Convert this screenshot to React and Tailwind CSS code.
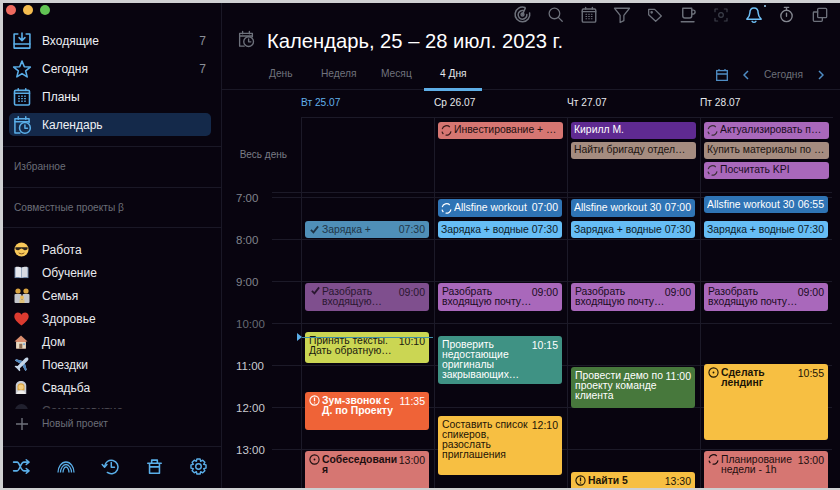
import React from "react";

const blue = "#5aaee8";

const Ic = ({ children, size = 20, color = blue, sw = 1.6, className = "" }) => (
  <svg width={size} height={size} viewBox="0 0 24 24" fill="none" stroke={color} strokeWidth={sw} strokeLinecap="round" strokeLinejoin="round" className={className}>
    {children}
  </svg>
);

const Inbox = () => (
  <Ic size={20} sw={1.9}>
    <path d="M7 3.5H2.5V20.5H21.5V3.5H17" />
    <path d="M2.5 15.5H21.5" />
    <path d="M12 2.5V11M8.5 8L12 11.5L15.5 8" />
  </Ic>
);
const Star = () => (
  <Ic size={20} sw={1.9}>
    <path d="M12 2.5L14.8 9.3L22 9.7L16.4 14.3L18.2 21.5L12 17.5L5.8 21.5L7.6 14.3L2 9.7L9.2 9.3Z" />
  </Ic>
);
const Plans = ({ color = blue, size = 20 }) => (
  <Ic size={size} color={color} sw={1.9}>
    <rect x="3" y="4" width="18" height="17.5" rx="1.5" />
    <path d="M3 7.5H21M7.5 2V4M16.5 2V4" />
    <path d="M8 11H8.8M11.6 11H12.4M15.2 11H16M8 14H8.8M11.6 14H12.4M15.2 14H16M8 17H8.8M11.6 17H12.4M15.2 17H16" strokeWidth="1.6" />
  </Ic>
);
const CalClock = ({ color = blue, size = 20 }) => (
  <Ic size={size} color={color} sw={1.8}>
    <path d="M9.5 21.5H3.5V4.5H20.5V9" />
    <path d="M3.5 8H20.5M7.5 2V5M16.5 2V5" />
    <circle cx="15.5" cy="15.5" r="6.5" />
    <path d="M15.5 12V15.8H18.5" />
  </Ic>
);

const Sunglasses = () => (
  <svg width="15" height="15" viewBox="0 0 16 16">
    <circle cx="8" cy="8" r="7.5" fill="#f8c95a" />
    <path d="M1.5 5.5H14.5V7C14.5 8.5 12 9 10.8 8.5C9.5 8 9 7 8 7C7 7 6.5 8 5.2 8.5C4 9 1.5 8.5 1.5 7Z" fill="#2a2420" />
    <path d="M5 11.5C6.5 13 9.5 13 11 11.5" stroke="#7a4a1a" strokeWidth="1" fill="none" />
  </svg>
);
const Book = () => (
  <svg width="15" height="13" viewBox="0 0 16 14">
    <rect x="0.5" y="1.5" width="15" height="11.5" fill="#6f87a8" />
    <path d="M1.5 1C4 0.6 6.5 1 7.7 1.8V12.6C6.5 12 4 11.6 1.5 12Z" fill="#e6e8ee" />
    <path d="M14.5 1C12 0.6 9.5 1 8.3 1.8V12.6C9.5 12 12 11.6 14.5 12Z" fill="#d8dbe3" />
  </svg>
);
const Family = () => (
  <svg width="16" height="15" viewBox="0 0 16 15">
    <circle cx="4" cy="3" r="2.6" fill="#d9a441" />
    <circle cx="12" cy="3" r="2.6" fill="#d9a441" />
    <rect x="0.5" y="6" width="7" height="9" rx="1" fill="#c3c6cc" />
    <rect x="8.5" y="6" width="7" height="9" rx="1" fill="#c3c6cc" />
    <circle cx="8" cy="9.5" r="2" fill="#e9b95a" />
    <rect x="5.5" y="11.5" width="5" height="3.5" fill="#e0c27a" />
  </svg>
);
const Heart = () => (
  <svg width="15" height="14" viewBox="0 0 16 15">
    <path d="M8 14.5C3 10.5 0.3 8 0.3 4.6C0.3 2.2 2.1 0.6 4.2 0.6C5.8 0.6 7.2 1.5 8 3C8.8 1.5 10.2 0.6 11.8 0.6C13.9 0.6 15.7 2.2 15.7 4.6C15.7 8 13 10.5 8 14.5Z" fill="#dc3b30" />
  </svg>
);
const House = () => (
  <svg width="14" height="14" viewBox="0 0 16 16">
    <path d="M8 0.5L0.5 7.5H2.5V15.5H13.5V7.5H15.5Z" fill="#d98d6e" />
    <rect x="2.5" y="8" width="11" height="7.5" fill="#e6d9c2" />
    <rect x="6" y="10" width="3.5" height="5.5" fill="#8a6a50" />
    <rect x="10.5" y="9.5" width="2" height="2" fill="#7aa9d8" />
  </svg>
);
const Plane = () => (
  <svg width="15" height="15" viewBox="0 0 16 16">
    <path d="M15 1C14 0.2 12.6 0.7 11.6 1.7L9 4.3L2.3 2.4L1 3.7L6.5 6.8L3.8 9.6L1.6 9.2L0.6 10.2L3.4 12.4L5.7 15.3L6.7 14.3L6.3 12.1L9.1 9.4L12.2 14.9L13.5 13.6L11.6 6.9L14.3 4.3C15.3 3.3 15.8 1.9 15 1Z" fill="#c5d6e8" />
    <path d="M9 4.3L2.3 2.4L1 3.7L6.5 6.8ZM9.1 9.4L12.2 14.9L13.5 13.6L11.6 6.9Z" fill="#4f86bd" />
  </svg>
);
const Bride = () => (
  <svg width="14" height="15" viewBox="0 0 16 16">
    <path d="M2 15.5V6C2 2.5 4.5 0.5 8 0.5C11.5 0.5 14 2.5 14 6V15.5Z" fill="#c9ccd4" />
    <path d="M4 11V6.5C4 4 6 3 8 3C10 3 12 4 12 6.5V11Z" fill="#d9a441" />
    <circle cx="8" cy="7.5" r="3" fill="#f6cd7c" />
    <path d="M3 15.5C3.5 12.5 5.5 11.5 8 11.5C10.5 11.5 12.5 12.5 13 15.5Z" fill="#f0efec" />
  </svg>
);

const nav = [
  { icon: <Inbox />, label: "Входящие", count: "7" },
  { icon: <Star />, label: "Сегодня", count: "7" },
  { icon: <Plans />, label: "Планы" },
  { icon: <CalClock />, label: "Календарь", active: true },
];
const projects = [
  [<Sunglasses />, "Работа"],
  [<Book />, "Обучение"],
  [<Family />, "Семья"],
  [<Heart />, "Здоровье"],
  [<House />, "Дом"],
  [<Plane />, "Поездки"],
  [<Bride />, "Свадьба"],
];

function Sidebar() {
  return (
    <aside className="relative flex h-full w-[219px] shrink-0 flex-col border-r border-[#1a1826]">
      <div className="flex gap-[7px] pl-[3px] pt-[2px]">
        <span className="h-[10px] w-[10px] rounded-full bg-[#ee6a5f]" />
        <span className="h-[10px] w-[10px] rounded-full bg-[#f5bd4f]" />
        <span className="h-[10px] w-[10px] rounded-full bg-[#61c454]" />
      </div>
      <nav className="mt-[14px] flex flex-col gap-[5px] px-[6px]">
        {nav.map((n) => (
          <div key={n.label} className={`flex h-[23px] w-[202px] items-center rounded-[5px] pl-[3px] pr-[5px] ${n.active ? "bg-[#14294a]" : ""}`}>
            <span className="flex w-[30px] shrink-0">{n.icon}</span>
            <span className="flex-1 text-[12px] text-[#eef0f4]">{n.label}</span>
            {n.count && <span className="text-[12px] text-[#8b8f98]">{n.count}</span>}
          </div>
        ))}
      </nav>
      <div className="mt-[10px] flex h-[41px] items-center border-t border-[#1a1826] pl-[11px] text-[10.2px] text-[#6b6e78]">Избранное</div>
      <div className="flex h-[40px] items-center border-t border-[#1a1826] pl-[11px] text-[10.2px] text-[#6b6e78]">Совместные проекты β</div>
      <div className="flex h-[214px] flex-col overflow-hidden border-t border-[#1a1826] pl-[7px] pt-[10px]">
        {projects.map(([ic, l]) => (
          <div key={l} className="flex h-[23px] shrink-0 items-center">
            <span className="flex w-[32px] shrink-0 pl-[4px]">{ic}</span>
            <span className="text-[12px] text-[#e8eaee]">{l}</span>
          </div>
        ))}
        <div className="h-[10px] shrink-0 overflow-hidden opacity-30">
          <div className="flex h-[23px] items-center">
            <span className="flex w-[32px] shrink-0 pl-[5px]"><span className="h-[13px] w-[13px] rounded-full bg-[#5a6278]" /></span>
            <span className="text-[12px] text-[#e8eaee]">Саморазвитие</span>
          </div>
        </div>
      </div>
      <div className="absolute left-[12px] top-[413px] flex items-center">
        <svg width="14" height="14" viewBox="0 0 14 14" stroke="#6f727c" strokeWidth="1.4"><path d="M7 1V13M1 7H13" /></svg>
        <span className="pl-[13px] text-[10.2px] text-[#6b6e78]">Новый проект</span>
      </div>
      <div className="mt-[5px] flex flex-1 items-center justify-between border-t border-[#1a1826] pb-[2px] pl-[9px] pr-[13px]">
        <Ic size={19} sw={2}>
          <path d="M2 6.5H6.5C9.5 6.5 11 17.5 15 17.5H21M2 17.5H6.5C9.5 17.5 11 6.5 15 6.5H21M18 3.5L21.5 6.5L18 9.5M18 14.5L21.5 17.5L18 20.5" />
        </Ic>
        <svg width="18" height="12" viewBox="0 0 18 12" fill="none" stroke={blue} strokeWidth="1.3">
          <path d="M1 11.5C1 6 4.5 1 9 1C13.5 1 17 6 17 11.5M3.5 11.5C3.5 7.5 6 3.5 9 3.5C12 3.5 14.5 7.5 14.5 11.5M6 11.5C6 9 7.3 6 9 6C10.7 6 12 9 12 11.5" />
        </svg>
        <Ic size={19} sw={1.9}>
          <path d="M4.5 12A8.5 8.5 0 1 1 8 19.5" />
          <path d="M1.5 9.5L4.5 12.8L7.5 9.5M13 7V13H17" />
        </Ic>
        <Ic size={17} sw={2.2}>
          <path d="M2.5 7.5H21.5M8 7.5V3H16V7.5M5 7.5V21.5H19V7.5M5 12.5H19" />
        </Ic>
        <Ic size={19} sw={1.8}>
          <path d="M10 2.5H14L14.7 5.4L17.3 4L20 6.7L18.6 9.3L21.5 10V14L18.6 14.7L20 17.3L17.3 20L14.7 18.6L14 21.5H10L9.3 18.6L6.7 20L4 17.3L5.4 14.7L2.5 14V10L5.4 9.3L4 6.7L6.7 4L9.3 5.4Z" />
          <circle cx="12" cy="12" r="3.5" />
        </Ic>
      </div>
    </aside>
  );
}

const Slot = ({ children }) => <span className="flex w-[33px] justify-center">{children}</span>;

function Toolbar() {
  const c = "#6d717b";
  return (
    <div className="flex h-[22px] items-center justify-end pr-[4px] pt-[1px]">
      <Slot>
        <Ic size={19} color={c} sw={1.9}>
          <path d="M15 3.2A9.3 9.3 0 1 0 21 10" />
          <path d="M13 7A5.5 5.5 0 1 0 17.5 12" />
          <circle cx="12" cy="12" r="1.8" />
          <path d="M12 12L15.5 4" />
        </Ic>
      </Slot>
      <Slot>
        <Ic size={17} color={c} sw={1.8}>
          <circle cx="10.5" cy="10.5" r="7.5" /><path d="M16 16L21.5 21.5" />
        </Ic>
      </Slot>
      <Slot><Plans color={c} size={18} /></Slot>
      <Slot>
        <Ic size={18} color={c} sw={1.7}>
          <path d="M2 3H22L14.5 12.5V19.5L9.5 22V12.5Z" />
        </Ic>
      </Slot>
      <Slot>
        <Ic size={16} color={c} sw={1.9}>
          <path d="M2.5 3.5H11.5L21.5 13.5L13 21.5L2.5 11.5Z" /><circle cx="7" cy="8" r="1" />
        </Ic>
      </Slot>
      <Slot>
        <Ic size={18} color={c} sw={1.9}>
          <path d="M5 3H17V13C17 15 16 16 14 16H8C6 16 5 15 5 13ZM17 5.5H19.5C21 5.5 21.5 6.5 21.5 8C21.5 10 20 11 17 11M3 21H20" />
        </Ic>
      </Slot>
      <Slot>
        <Ic size={16} color="#3c3f4a" sw={1.8}>
          <path d="M3 7V3H7M17 3H21V7M21 17V21H17M7 21H3V17" /><circle cx="12" cy="12" r="3.5" />
        </Ic>
      </Slot>
      <Slot>
        <span className="relative flex">
          <Ic size={18} color="#6fc0f5" sw={2}>
            <path d="M12 2.5C8 2.5 6.5 5.5 6.5 9C6.5 13 5 15 2.5 17.5H21.5C19 15 17.5 13 17.5 9C17.5 5.5 16 2.5 12 2.5Z" />
            <path d="M9.5 20.5C10.5 22 13.5 22 14.5 20.5" />
          </Ic>
          <span className="absolute -right-[3px] -top-[1px] h-[2px] w-[2px] rounded-full bg-[#9fd4f8]" />
        </span>
      </Slot>
      <Slot>
        <Ic size={17} color="#858891" sw={1.9}>
          <circle cx="12" cy="14" r="8" /><path d="M12 2V6M9 2H15M12 10V14.5" />
        </Ic>
      </Slot>
      <Slot>
        <Ic size={16} color={c} sw={2}>
          <rect x="8.5" y="2" width="13.5" height="14" rx="1.5" />
          <path d="M8.5 7.5H3C2.4 7.5 2 8 2 8.5V20C2 20.8 2.5 21.5 3.3 21.5H14C14.8 21.5 15.5 20.8 15.5 20V16" />
        </Ic>
      </Slot>
    </div>
  );
}

function Tabs() {
  return (
    <div className="flex h-[26px] items-start border-b border-[#1a1826] pl-[47px] pr-[16px]">
      {[
        ["День", "w-[52px]"],
        ["Неделя", "w-[60px]"],
        ["Месяц", "w-[43px]"],
      ].map(([t, w]) => (
        <span key={t} className={`${w} whitespace-nowrap pt-[2px] text-[10.2px] text-[#70737d]`}>{t}</span>
      ))}
      <span className="relative h-full w-[58px] pl-[16px] pt-[2px] text-[10.2px] text-[#e6e8ec]">
        4 Дня
        <span className="absolute -bottom-[2px] left-0 h-[3px] w-[58px] bg-[#5eaee6]" />
      </span>
      <div className="ml-auto flex items-center gap-[15px] pt-[3px] text-[10.2px] text-[#6d7079]">
        <svg width="12" height="12" viewBox="0 0 12 12" fill="none" stroke="#4f8dc4" strokeWidth="1.3">
          <rect x="0.7" y="1.6" width="10.6" height="9.8" /><path d="M0.7 5H11.3M3 0V2M9 0V2" />
        </svg>
        <svg width="6" height="10" viewBox="0 0 6 10" fill="none" stroke="#4f8dc4" strokeWidth="1.5"><path d="M5 1L1 5L5 9" /></svg>
        <span>Сегодня</span>
        <svg width="6" height="10" viewBox="0 0 6 10" fill="none" stroke="#4f8dc4" strokeWidth="1.5"><path d="M1 1L5 5L1 9" /></svg>
      </div>
    </div>
  );
}

const Spin = ({ color = "#3b3038" }) => (
  <svg width="11" height="11" viewBox="0 0 12 12" fill="none" stroke={color} strokeWidth="1.3" className="mr-[2px] shrink-0">
    <path d="M9.6 2.2A5 5 0 0 0 1.3 4.5M1.1 7.3A5 5 0 0 0 2.6 9.8M5 11A5 5 0 0 0 10.9 7" />
  </svg>
);
const Check = ({ color }) => (
  <svg width="9" height="9" viewBox="0 0 10 10" fill="none" stroke={color} strokeWidth="2" className="ml-[2px] mr-[3px] shrink-0"><path d="M1 5.5L3.8 8.2L9 1.5" /></svg>
);
const Dot = ({ color, mark }) => (
  <svg width="11" height="11" viewBox="0 0 12 12" fill="none" stroke={color} strokeWidth="1.2" className="mr-[2px] shrink-0">
    <circle cx="6" cy="6" r="5" />
    {mark ? <path d="M6 2.8V6.8M6 8.3V9.2" strokeWidth="1.4" /> : <circle cx="6" cy="6" r="1" fill={color} stroke="none" />}
  </svg>
);

function AllDay({ bg, fg, icon, text }) {
  return (
    <div className="flex h-[16.5px] items-center rounded-[3px] px-[3px] text-[10.4px]" style={{ background: bg, color: fg }}>
      {icon}
      <span className="truncate">{text}</span>
    </div>
  );
}

function Ev({ top, h, bg, fg, time, text, icon, bold, oneLine, left = 3 }) {
  if (oneLine) {
    return (
      <div className="absolute z-[1] flex w-[124px] items-center rounded-[3px] pl-[3px] pr-[4px] text-[10.4px]" style={{ top, height: h, left, background: bg, color: fg }}>
        {icon}
        <span className="min-w-0 flex-1 truncate">{text}</span>
        <span className="ml-[2px] shrink-0 text-[10.5px]">{time}</span>
      </div>
    );
  }
  return (
    <div className="absolute z-[1] flex w-[124px] rounded-[3px] pl-[4px] pr-[4px] pt-[4px] text-[10.4px] leading-[10px]" style={{ top, height: h, left, background: bg, color: fg }}>
      {icon && <span className="mt-[-1px] flex w-[13px] shrink-0">{icon}</span>}
      <div className="min-w-0 flex-1">
        <span className="float-right text-[10.5px]">{time}</span>
        <span className={`whitespace-pre ${bold ? "font-bold" : ""}`}>{text}</span>
      </div>
    </div>
  );
}

const base = 192;
const day1 = [
  { top: 221, h: 17, bg: "#4f8fb8", fg: "#1f3547", time: "07:30", text: "Зарядка +", icon: <Check color="#1f3547" />, oneLine: true },
  { top: 283, h: 28, bg: "#7f4f8e", fg: "#2a1730", time: "09:00", text: "Разобрать\nвходящую…", icon: <Check color="#2a1730" /> },
  { top: 332, h: 31, bg: "#cbd653", fg: "#1a1a10", time: "10:10", text: "Принять тексты.\nДать обратную…" },
  { top: 392, h: 38, bg: "#ef6337", fg: "#fff", time: "11:35", text: "Зум-звонок с\nД. по Проекту", icon: <Dot color="#fff" mark />, bold: true },
  { top: 451, h: 60, bg: "#d67672", fg: "#1c0f10", time: "13:00", text: "Собеседовани\nя", icon: <Dot color="#1c0f10" />, bold: true },
];
const day2 = [
  { top: 199, h: 18, bg: "#2f74b5", fg: "#fff", time: "07:00", text: "Allsfine workout", icon: <Spin color="#fff" />, oneLine: true },
  { top: 221, h: 17, bg: "#66bdf5", fg: "#0d1a26", time: "07:30", text: "Зарядка + водные", oneLine: true },
  { top: 283, h: 28, bg: "#a968bb", fg: "#190c1e", time: "09:00", text: "Разобрать\nвходящую почту…" },
  { top: 336, h: 48, bg: "#3f9284", fg: "#fff", time: "10:15", text: "Проверить\nнедостающие\nоригиналы\nзакрывающих…" },
  { top: 416, h: 59, bg: "#f7bf42", fg: "#1c1406", time: "12:10", text: "Составить список\nспикеров,\nразослать\nприглашения" },
];
const day3 = [
  { top: 199, h: 18, bg: "#2f74b5", fg: "#fff", time: "07:00", text: "Allsfine workout 30", oneLine: true },
  { top: 221, h: 17, bg: "#66bdf5", fg: "#0d1a26", time: "07:30", text: "Зарядка + водные", oneLine: true },
  { top: 283, h: 28, bg: "#a968bb", fg: "#190c1e", time: "09:00", text: "Разобрать\nвходящую почту…" },
  { top: 367, h: 41, bg: "#47783c", fg: "#fff", time: "11:00", text: "Провести демо по\nпроекту команде\nклиента" },
  { top: 472, h: 40, bg: "#f7bf42", fg: "#1c1406", time: "13:30", text: "Найти 5", icon: <Dot color="#1c1406" mark />, bold: true },
];
const day4 = [
  { top: 196, h: 17, bg: "#2f74b5", fg: "#fff", time: "06:55", text: "Allsfine workout 30", oneLine: true },
  { top: 221, h: 17, bg: "#66bdf5", fg: "#0d1a26", time: "07:30", text: "Зарядка + водные", oneLine: true },
  { top: 283, h: 28, bg: "#a968bb", fg: "#190c1e", time: "09:00", text: "Разобрать\nвходящую почту…" },
  { top: 364, h: 76, bg: "#f7bf42", fg: "#1c1406", time: "10:55", text: "Сделать\nлендинг", icon: <Dot color="#1c1406" />, bold: true },
  { top: 451, h: 60, bg: "#d67672", fg: "#1c0f10", time: "13:00", text: "Планирование\nнедели - 1h", icon: <Spin color="#1c0f10" /> },
];

const hours = [
  ["7:00", "#80838c"],
  ["8:00", "#80838c"],
  ["9:00", "#80838c"],
  ["10:00", "#666a74"],
  ["11:00", "#c9cbd0"],
  ["12:00", "#c9cbd0"],
  ["13:00", "#c9cbd0"],
  ["14:00", "#c9cbd0"],
];

const dayHeads = [
  ["Вт 25.07", "#62b0ea"],
  ["Ср 26.07", "#e6e8ec"],
  ["Чт 27.07", "#e6e8ec"],
  ["Пт 28.07", "#e6e8ec"],
];

const allDay = [
  [],
  [{ bg: "#d67672", fg: "#1c0f10", icon: <Spin color="#3a1a1a" />, text: "Инвестирование + …" }],
  [
    { bg: "#5f2a91", fg: "#fff", text: "Кирилл М." },
    { bg: "#a58c80", fg: "#1c1410", text: "Найти бригаду отдел…" },
  ],
  [
    { bg: "#a968bb", fg: "#190c1e", icon: <Spin />, text: "Актуализировать п…" },
    { bg: "#a58c80", fg: "#1c1410", text: "Купить материалы по …" },
    { bg: "#a968bb", fg: "#190c1e", icon: <Spin />, text: "Посчитать KPI" },
  ],
];

function Calendar() {
  const days = [day1, day2, day3, day4];
  return (
    <div className="relative min-h-0 flex-1 overflow-hidden">
      <div className="flex h-[27px] pl-[79px]">
        {dayHeads.map(([d, c]) => (
          <span key={d} className="w-[133px] pt-[6px] text-[10.2px] leading-[14px]" style={{ color: c }}>{d}</span>
        ))}
      </div>
      <div className="flex h-[75px]">
        <div className="flex w-[79px] shrink-0 items-center justify-end pr-[14px] text-[10px] text-[#7a7d86]">Весь день</div>
        {allDay.map((items, i) => (
          <div key={i} className="flex w-[133px] flex-col gap-[3.5px] border-l border-t border-[#1c1a28] pl-[3px] pr-[4px] pt-[4px]">
            {items.map((a) => <AllDay key={a.text} {...a} />)}
          </div>
        ))}
      </div>
      <div className="relative flex h-[300px]">
        <div className="w-[79px] shrink-0 pt-[5px]">
          {hours.map(([h, c]) => (
            <div key={h} className="flex h-[42px] -translate-y-[7px] pl-[14px] text-[11.5px] leading-[16px]" style={{ color: c }}>{h}</div>
          ))}
        </div>
        {days.map((evs, i) => (
          <div key={i} className="relative w-[133px] border-l border-[#1c1a28]">
            {evs.map((e) => <Ev key={e.text} {...e} top={e.top - base} />)}
          </div>
        ))}
        <div className="pointer-events-none absolute left-[50px] right-[8px] top-0 border-t border-[#1c1a28]">
          {hours.map(([h], i) => (
            <div key={h} className="h-[42px] border-b border-[#1c1a28]" style={i === 0 ? { height: 5 } : undefined} />
          ))}
        </div>
        <div className="absolute left-[75px] top-[141px] z-10 flex w-[136px] items-center">
          <span className="h-0 w-0 border-y-[4px] border-l-[5px] border-y-transparent border-l-[#5aaee8]" />
          <span className="h-[1px] flex-1 bg-[#3e8fa8]" />
        </div>
      </div>
    </div>
  );
}

export default function App() {
  return (
    <div className="h-[490px] w-[840px] overflow-hidden bg-[#cfd0d2] pb-[2px] pl-[3px] pt-[3px] font-['Liberation_Sans',sans-serif] antialiased">
      <div className="flex h-full w-full bg-[#08040f]">
        <Sidebar />
        <main className="flex min-w-0 flex-1 flex-col">
          <Toolbar />
          <div className="flex h-[39px] items-start pl-[15px] pt-[4px]">
            <span className="pt-[1px]"><CalClock color="#6d717b" size={18} /></span>
            <h1 className="pl-[12px] text-[20.2px] font-normal leading-[24px] text-white">Календарь, 25 – 28 июл. 2023 г.</h1>
          </div>
          <Tabs />
          <Calendar />
        </main>
      </div>
    </div>
  );
}
